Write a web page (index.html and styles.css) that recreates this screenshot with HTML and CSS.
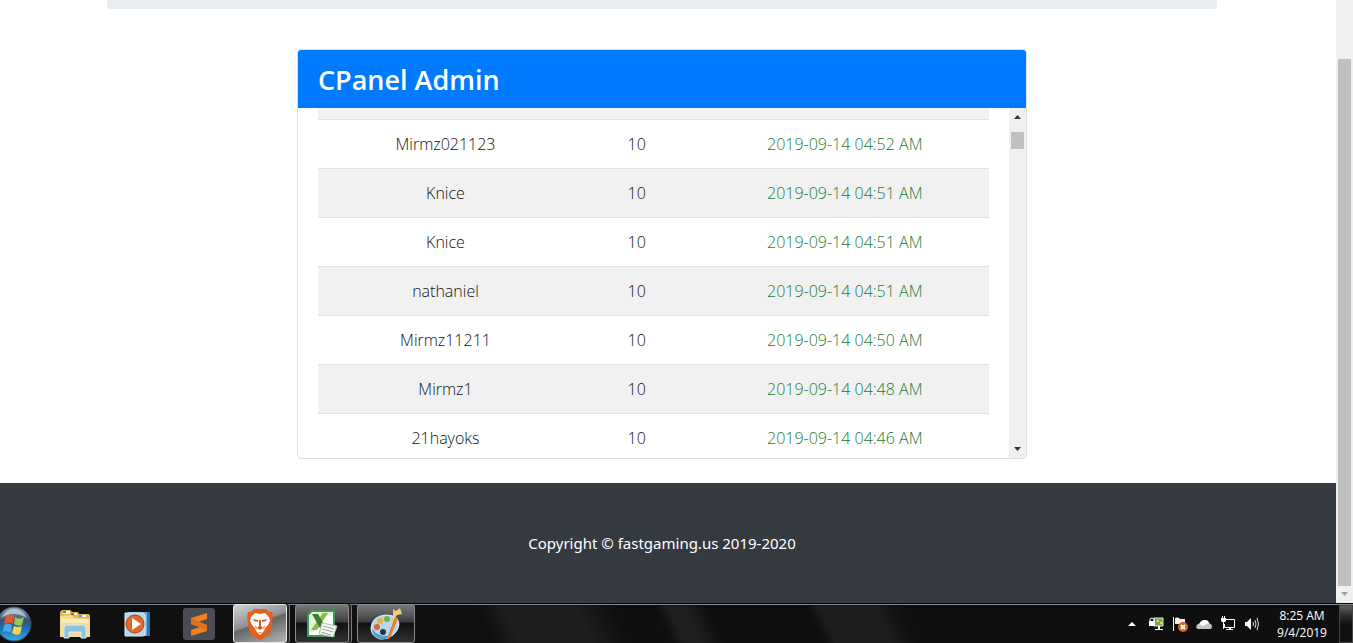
FILE: index.html
```
<!DOCTYPE html>
<html lang="en">
<head>
    <meta charset="UTF-8">
    <meta name="viewport" content="width=device-width, initial-scale=1.0">
    <title>CPanel Admin</title>
    <link rel="stylesheet" href="styles.css">
</head>
<body>
    <div class="window">
        <div class="page">
            <main>
                <div class="jumbotron"></div>
                <section class="card">
                    <h3 class="card-header">CPanel Admin</h3>
                    <div class="card-body">
                        <div class="table-wrap">
                            <table class="table">
                                <tbody>
                                    <tr class="cut"><td class="user"></td><td class="amount"></td><td class="date"></td></tr>
                                    <tr><td>Mirmz021123</td><td>10</td><td class="date">2019-09-14 04:52 AM</td></tr>
                                    <tr><td>Knice</td><td>10</td><td class="date">2019-09-14 04:51 AM</td></tr>
                                    <tr><td>Knice</td><td>10</td><td class="date">2019-09-14 04:51 AM</td></tr>
                                    <tr><td>nathaniel</td><td>10</td><td class="date">2019-09-14 04:51 AM</td></tr>
                                    <tr><td>Mirmz11211</td><td>10</td><td class="date">2019-09-14 04:50 AM</td></tr>
                                    <tr><td>Mirmz1</td><td>10</td><td class="date">2019-09-14 04:48 AM</td></tr>
                                    <tr><td>21hayoks</td><td>10</td><td class="date">2019-09-14 04:46 AM</td></tr>
                                </tbody>
                            </table>
                        </div>
                        <div class="scrollbar">
                            <svg class="arrow" viewBox="0 0 17 17"><path d="M5 11h7L8.500 7z"/></svg>
                            <div class="track"><div class="thumb thumb-small"></div></div>
                            <svg class="arrow" viewBox="0 0 17 17"><path d="M5 6h7l-3.500 4z"/></svg>
                        </div>
                    </div>
                </section>
            </main>
            <footer>
                <p>Copyright © fastgaming.us 2019-2020</p>
            </footer>
        </div>
        <div class="scrollbar page-scroll">
            <div class="track"><div class="thumb thumb-page"></div></div>
            <svg class="arrow muted" viewBox="0 0 17 17"><path d="M5 6h7l-3.500 4z"/></svg>
        </div>
    </div>

    <!-- Taskbar -->
    <div class="taskbar">
        <button class="start" aria-label="Start">
            <svg width="36" height="36" viewBox="0 0 36 36">
                <defs>
                    <linearGradient id="orb" x1="0" y1="0" x2="0" y2="1">
                        <stop offset="0" stop-color="#8fa6b8"/>
                        <stop offset=".4" stop-color="#36546e"/>
                        <stop offset=".6" stop-color="#1b6ba8"/>
                        <stop offset="1" stop-color="#2fb0ea"/>
                    </linearGradient>
                </defs>
                <circle cx="18" cy="18" r="17" fill="url(#orb)" stroke="#3a5064"/>
                <path d="M5 12Q10 3 18 3t13 9q-7-4-13-4T5 12z" fill="#dce8f0" opacity=".6"/>
                <path d="M10 10q4-3 8 0l-1 8q-4-3-9 0z" fill="#e8562a"/>
                <path d="M19 11q4 3 9 0l-2 8q-4 2-8-1z" fill="#9ac355"/>
                <path d="M8 19q4-3 8 0l-1 8q-4-3-8-1z" fill="#4aa5e0"/>
                <path d="M18 20q4 2 8 0l-2 8q-4 2-8-1z" fill="#fbd24c"/>
            </svg>
        </button>
        <button class="pin" aria-label="Windows Explorer">
            <svg width="32" height="32" viewBox="0 0 32 32">
                <path d="M1 4l2-2h8l2 2h6l1 2h10l1 2v21H1z" fill="#d9b860"/>
                <path d="M4 3h7v3H4z" fill="#f4f4ef"/>
                <path d="M4 3h3v2H4z" fill="#3f9e4f"/>
                <path d="M12 5h6v2h-6z" fill="#f4f4ef"/>
                <path d="M12 5h3v2h-3z" fill="#d0502e"/>
                <path d="M20 7h7v2h-7z" fill="#f4f4ef"/>
                <path d="M20 7h3v2h-3z" fill="#4aa3d8"/>
                <path d="M1 8l11-1 4 3 15 1v18H1z" fill="#f4dc92"/>
                <path d="M3 11h26v4H3z" fill="#fbebb6"/>
                <path d="M5 30V20q0-3 3-3h16q3 0 3 3v10h-5v-6H10v6z" fill="#8cc4e8" stroke="#d6edf9"/>
            </svg>
        </button>
        <button class="pin" aria-label="Windows Media Player">
            <svg width="32" height="32" viewBox="0 0 32 32">
                <path d="M8 4h21v24H10z" fill="#2479b5"/>
                <path d="M7 4h19v24H7z" fill="#63b0df"/>
                <path d="M4 5h18l2 2v20l-2 1H4z" fill="#b9d4e6" stroke="#e0edf5"/>
                <circle cx="14" cy="16" r="9" fill="#e3692b" stroke="#a94718"/>
                <path d="M11 10l9 6-9 6z" fill="#fff"/>
            </svg>
        </button>
        <button class="pin" aria-label="Sublime Text">
            <svg width="32" height="32" viewBox="0 0 32 32">
                <rect width="32" height="32" rx="3" fill="#4a4e52"/>
                <path d="M8 10l16-5v6l-9 3 9 3v6L8 28v-6l9-3-9-3z" fill="#f08022"/>
                <path d="M8 10v6l16 6v-5z" fill="#e2701c"/>
            </svg>
        </button>
        <button class="task active stacked" aria-label="Brave">
            <svg width="28" height="32" viewBox="0 0 28 32">
                <path d="M8 1h12l3 3h3l1 5-2 13q-1 4-4 6l-7 4-7-4q-3-2-4-6L1 9l1-5h3z" fill="#e3601f"/>
                <path d="M9 5l5 1 5-1 4 4 1 4-2 4-3 3-1 3-4 4-4-4-1-3-3-3-2-4 1-4z" fill="#fff"/>
                <path d="M7 11l5 1v2l-4-1zM21 11l-5 1v2l4-1zM13 12h2v6l2 2-3 2-3-2 2-2zM9 17l2 3-1 1zM19 17l-2 3 1 1zM12 24h4l-2 1z" fill="#d95a1e"/>
            </svg>
        </button>
        <button class="task stacked" aria-label="Excel">
            <svg width="32" height="32" viewBox="0 0 32 32">
                <path d="M6 3h22v25H2V7z" fill="#fff" stroke="#3f9a50" stroke-width="2"/>
                <path d="M3 24V8l4-4h20v3Q12 9 8 24z" fill="#e2efdc"/>
                <path d="M17 5h5L11 22H5z" fill="#8dbb3c"/>
                <path d="M6 6h6l9 16h-6z" fill="#3b7d35"/>
                <path d="M16 15l15 3-4 11-14-3z" fill="#f5f8f5" stroke="#b4bfb4"/>
                <path d="M17 18l11 3M16 21l11 3M15 24l10 3" stroke="#98a498"/>
            </svg>
        </button>
        <button class="task paint" aria-label="Paint">
            <svg width="34" height="34" viewBox="0 0 34 34">
                <path d="M17 8q12 0 13 9 0 6-6 11-6 5-13 4-9-3-9-11Q3 9 17 8z" fill="#b6d7ee" stroke="#e5f2fa"/>
                <path d="M3 22q0 7 8 10 7 1 12-4-7 2-12 0-5-2-8-6z" fill="#579bd0"/>
                <circle cx="8" cy="20" r="3" fill="#e2652c"/>
                <circle cx="11" cy="14" r="3" fill="#e9b43e"/>
                <circle cx="18" cy="12" r="3" fill="#6fb445"/>
                <circle cx="25" cy="15" r="3" fill="#d5d46a"/>
                <circle cx="14" cy="25" r="3" fill="#1e3850"/>
                <path d="M26 10l3 1-8 20-2 1v-3z" fill="#e57f28"/>
                <path d="M24 2l3 2 4-3 2 6-5 1-2 3-2-2z" fill="#edcf72"/>
            </svg>
        </button>
        <div class="tray">
            <svg width="16" height="16" viewBox="0 0 16 16"><path d="M4 10h8L8 6z" fill="#fff"/></svg>
            <svg width="16" height="16" viewBox="0 0 16 16">
                <path d="M6 2h9v8H6z" fill="#79a94c" stroke="#e8e8e8"/>
                <path d="M9 4h2v2H9zM12 6h2v2h-2z" fill="#d9df6c"/>
                <path d="M10 10h2v3h3v1H7v-1h3z" fill="#fff"/>
                <path d="M1 5h6v5H1z" fill="#fff"/>
                <path d="M2 5V3q2-2 4 0v2" fill="none" stroke="#fff"/>
            </svg>
            <svg width="16" height="16" viewBox="0 0 16 16">
                <path d="M1 1h1v14H1z" fill="#fff"/>
                <path d="M3 2q2-1 4 0l1 1h5v6H8L7 8H3z" fill="#f0f0f0"/>
                <circle cx="11" cy="11" r="5" fill="#dd5f1e"/>
                <path d="M9 9l4 4M13 9l-4 4" stroke="#fff" stroke-width="2"/>
            </svg>
            <svg width="16" height="16" viewBox="0 0 16 16">
                <path d="M2 13q-3-1-1-4 1-2 3-1 1-4 5-4 3 0 4 3 3 1 3 4 0 2-2 2z" fill="#c4c4c4"/>
                <path d="M3 8q2-4 6-4 3 0 4 3l-6 3z" fill="#fff"/>
            </svg>
            <svg width="16" height="16" viewBox="0 0 16 16">
                <path d="M6 3.500h8.500v8h-10V8" fill="none" stroke="#fff"/>
                <path d="M9 12h2v1h2v1H6v-1h3z" fill="#fff"/>
                <path d="M1 2h5v3L5 6H4v7H3V6H2L1 5zM2 0h1v2H2zM4 0h1v2H4z" fill="#fff"/>
            </svg>
            <svg width="16" height="16" viewBox="0 0 16 16">
                <path d="M1 6h2l4-4v12l-4-4H1z" fill="#fff"/>
                <path d="M9 6q1 2 0 4M11 4q2 4 0 8M13 2q3 6 0 12" fill="none" stroke="#e0e0e0"/>
            </svg>
        </div>
        <div class="clock">
            <span>8:25 AM</span>
            <span>9/4/2019</span>
        </div>
        <button class="show-desktop" aria-label="Show desktop"></button>
    </div>
</body>
</html>
```
FILE: styles.css
```
* {
    box-sizing: border-box;
}
body {
    margin: 0;
    height: 100vh;
    display: flex;
    flex-direction: column;
    overflow: hidden;
    font-family: "Segoe UI", "Open Sans", "Noto Sans", sans-serif;
    font-size: 16px;
    line-height: 24px;
    color: #111;
    background: #fff;
}
button {
    border: none;
    padding: 0;
    background: none;
}
svg {
    display: block;
    flex: none;
}
.window {
    flex: 1;
    min-height: 0;
    display: flex;
}
.page {
    flex: 1;
    display: flex;
    flex-direction: column;
}
main {
    flex: 1;
    min-height: 0;
    padding: 0 12px 24px 0;
    display: flex;
    flex-direction: column;
    align-items: center;
}
.jumbotron {
    width: 100%;
    max-width: 1110px;
    height: 9px;
    margin-bottom: 40px;
    flex: none;
    background: #e9ecef;
    border-radius: 0 0 4px 4px;
}
.card {
    flex: 1;
    min-height: 0;
    width: 100%;
    max-width: 730px;
    display: flex;
    flex-direction: column;
    border: 1px solid #dfdfdf;
    border-radius: 4px;
    overflow: hidden;
}
.card-header {
    margin: 0;
    padding: 13px 20px 11px;
    background: #007bff;
    color: #fff;
    font-size: 27px;
    line-height: 34px;
    font-weight: 600;
}
.card-body {
    flex: 1;
    min-height: 0;
    display: flex;
}
.table-wrap {
    flex: 1;
    padding: 0 20px;
    overflow: hidden;
}
.table {
    width: 100%;
    table-layout: fixed;
    border-collapse: collapse;
    text-align: center;
    font-weight: 300;
}
.table td {
    height: 49px;
    padding: 12px;
    border-top: 1px solid #dee2e6;
}
.table tr:nth-child(odd) {
    background: #f1f1f1;
}
.table .cut td {
    height: 11px;
    padding: 0;
    border-top: none;
}
.cut .user {
    width: 38%;
}
.cut .amount {
    width: 19%;
}
.date {
    color: #1c7c34;
}
.scrollbar {
    width: 17px;
    display: flex;
    flex-direction: column;
    background: #f0f0f0;
}
.arrow {
    width: 17px;
    height: 17px;
    fill: #333;
}
.muted {
    fill: #a0a0a0;
}
.track {
    flex: 1;
    padding: 0 2px;
    display: flex;
    flex-direction: column;
}
.thumb {
    background: #c0c0c0;
}
.thumb-small {
    height: 17px;
    margin-top: 7px;
}
.thumb-page {
    flex: 1;
    margin-top: 59px;
}
footer {
    padding: 48px 12px 48px 0;
    background: #343a40;
    color: #fff;
    font-family: "Segoe UI", "Noto Sans", sans-serif;
    font-size: 15px;
    text-align: center;
}
footer p {
    margin: 0;
}

/* Taskbar */
.taskbar {
    height: 40px;
    flex: none;
    display: flex;
    align-items: center;
    border-top: 1px solid #08080a;
    box-shadow: inset 0 1px #85858c;
    background: linear-gradient(65deg, #101010 36%, #1d1d1d 38%, #1d1d1d 43%, #0f0f0f 46%, #0f0f0f 49%, #1e1e1e 50%, #1e1e1e 51%, #0e0e0e 53%, #0e0e0e 60%, #1c1c1c 61%, #1c1c1c 65%, #0f0f0f 67%);
    color: #fff;
}
.start {
    width: 36px;
    margin-left: -4px;
    margin-right: 27px;
}
.pin {
    width: 32px;
    margin-right: 30px;
}
.pin + .task {
    margin-left: -12px;
}
.task {
    width: 58px;
    height: 39px;
    margin-right: 4px;
    display: flex;
    align-items: center;
    justify-content: center;
    border: 1px solid #8a8a8a;
    border-radius: 3px;
    background: linear-gradient(#77797b, #3c3e40 45%, #111 50%, #303234);
}
.stacked {
    width: 54px;
    margin-right: 8px;
    box-shadow: 2px 0 #222, 3px 0 #777;
}
.active {
    border-color: #e8e8e8;
    background: linear-gradient(160deg, #d2d2d2, #909294 45%, #626466 50%, #b5b5b5);
}
.tray {
    margin-left: auto;
    display: flex;
    gap: 8px;
}
.clock {
    width: 72px;
    margin: 0 1px 0 6px;
    display: flex;
    flex-direction: column;
    font-size: 12px;
    line-height: 17px;
    text-align: center;
}
.show-desktop {
    width: 14px;
    height: 38px;
    border: 1px solid #444;
    background: linear-gradient(#606060, #303030 25%, #111 50%);
}
```
